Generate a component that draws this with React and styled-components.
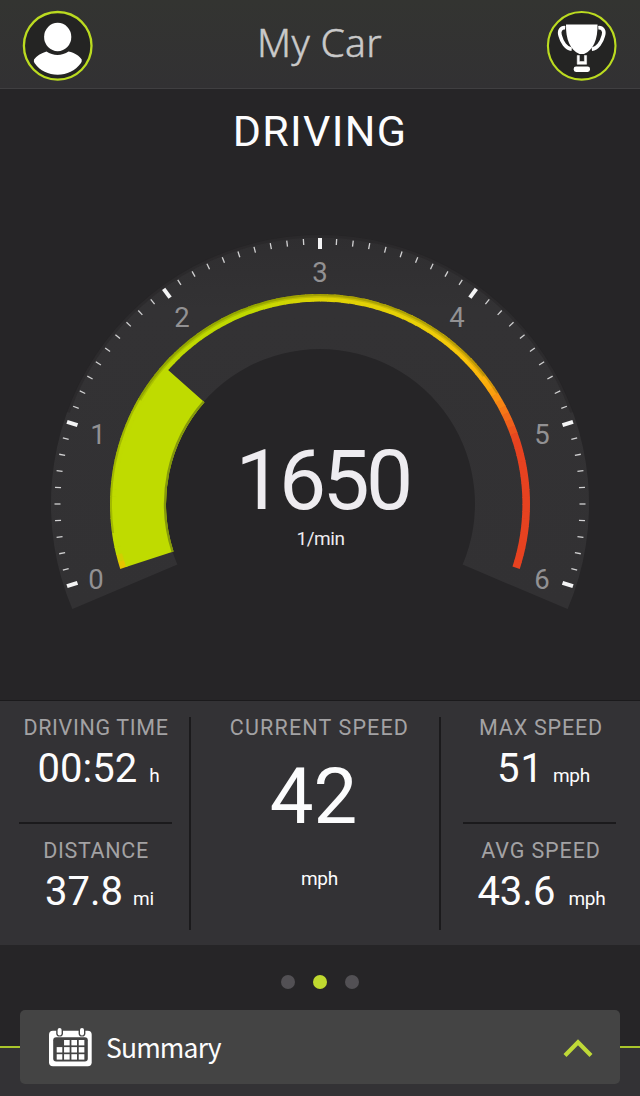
import React from 'react';
import styled, { createGlobalStyle, css, ThemeProvider } from 'styled-components';

const theme = {
  colors: {
    background: '#262527',
    panel: '#333235',
    card: '#444444',
    lime: '#bfd92f',
    arc: '#bfdb00',
    label: '#a3a2a4',
    line: '#1b1a1c',
    text: '#fcfcfd',
  },
  font: "Roboto, 'Noto Sans', sans-serif",
  titleFont: "'Noto Sans', 'Open Sans', sans-serif",
};

const GlobalStyle = createGlobalStyle`
  * {
    box-sizing: border-box;
  }

  body {
    margin: 0;
    background: #262527;
  }
`;

const Screen = styled.div(({ theme: t }) => css`
  display: flex;
  flex-direction: column;
  width: 640px;
  height: 1096px;
  overflow: hidden;
  background: ${t.colors.background};
  color: ${t.colors.text};
  font-family: ${t.font};
`);

const Header = styled.header`
  display: flex;
  justify-content: space-between;
  flex: none;
  height: 89px;
  padding: 10px 23px 0 22px;
  background: linear-gradient(#333431, #323133);
  border-bottom: 1px solid #403f41;
`;

const Title = styled.h1(({ theme: t }) => css`
  margin: -9px 0 0;
  color: #c9c9c9;
  font-family: ${t.titleFont};
  font-size: 39px;
  font-weight: 350;
  line-height: 82px;
  letter-spacing: 0.3px;
  -webkit-text-stroke: 0.5px #c9c9c9;
`);

const RoundButton = styled.button`
  width: 71px;
  height: 71px;
  padding: 0;
  border: 0;
  background: none;

  svg {
    display: block;
  }
`;

const Main = styled.main`
  flex: none;
  height: 611px;
`;

const Mode = styled.h2`
  height: 80px;
  margin: 0;
  font-size: 43px;
  font-weight: 400;
  line-height: 84px;
  letter-spacing: 1.3px;
  text-align: center;
`;

const GaugeArea = styled.div`
  display: grid;
  height: 531px;

  > * {
    grid-area: 1 / 1;
  }
`;

const Readout = styled.div`
  display: flex;
  flex-direction: column;
  align-items: center;
  padding-top: 276px;
`;

const Rpm = styled.div`
  padding-left: 5px;
  color: #eeecf0;
  font-size: 84px;
  line-height: 72px;
  letter-spacing: -3.7px;
`;

const RpmUnit = styled.div`
  margin-top: 9px;
  padding-left: 1px;
  color: #eeecf0;
  font-size: 19px;
  line-height: 26px;
  letter-spacing: -0.5px;
`;

const Stats = styled.section(({ theme: t }) => css`
  display: grid;
  grid-template-columns: 191px 250px 199px;
  flex: none;
  height: 245px;
  padding: 16px 0 15px;
  background: ${t.colors.panel};
  border-top: 1px solid ${t.colors.line};
`);

const Column = styled.div(({ theme: t, $divided }) => css`
  display: flex;
  flex-direction: column;
  border-right: ${$divided ? `2px solid ${t.colors.line}` : '0'};
`);

const Stat = styled.div`
  display: flex;
  flex-direction: column;
  flex: 1;
  align-items: center;
  padding-left: ${({ $shift }) => $shift || '0'};
`;

const Label = styled.div(({ theme: t, $spacing }) => css`
  color: ${t.colors.label};
  font-size: 21.5px;
  line-height: 21px;
  letter-spacing: ${$spacing || '0.65px'};
  white-space: nowrap;
`);

const Value = styled.div`
  display: flex;
  align-items: baseline;
  gap: ${({ $gap }) => $gap || '12px'};
  margin-top: 11px;
  padding-left: ${({ $shift }) => $shift || '0'};
  font-size: 40px;
  line-height: 40px;
  letter-spacing: ${({ $spacing }) => $spacing || '0'};
  white-space: nowrap;
`;

const Unit = styled.span`
  font-size: 19px;
  line-height: 1;
  letter-spacing: -0.2px;
`;

const BigValue = styled.div`
  margin-top: 19px;
  padding-right: 12px;
  font-size: 78px;
  line-height: 80px;
`;

const BigUnit = styled(Unit)`
  margin-top: 22px;
  line-height: 40px;
`;

const Rule = styled.hr(({ theme: t, $inset }) => css`
  width: 153px;
  height: 2px;
  margin: 15px 0 16px ${$inset};
  border: 0;
  background: ${t.colors.line};
`);

const Dots = styled.nav`
  display: flex;
  justify-content: center;
  gap: 18px;
  flex: none;
  height: 65px;
  padding-top: 30px;
`;

const Dot = styled.span(({ theme: t, $active }) => css`
  width: 14px;
  height: 14px;
  border-radius: 50%;
  background: ${$active ? t.colors.lime : '#525054'};
`);

const Footer = styled.footer(({ theme: t }) => css`
  flex: 1;
  padding: 0 20px;
  background: linear-gradient(
    ${t.colors.background} 36px,
    #a9c52b 36px,
    #a9c52b 38px,
    ${t.colors.panel} 38px
  );
`);

const SummaryBar = styled.div(({ theme: t }) => css`
  display: flex;
  align-items: center;
  height: 74px;
  padding: 0 27px 0 28px;
  border-radius: 5px;
  background: ${t.colors.card};

  svg:last-child {
    margin-left: auto;
  }
`);

const SummaryText = styled.span`
  margin-left: 14px;
  font-family: 'Noto Sans CJK SC', 'Noto Sans', sans-serif;
  font-size: 26.5px;
  line-height: 40px;
  letter-spacing: -0.85px;
`;

const CX = 320;
const CY = 504;

const point = (radius, degrees) => {
  const a = (degrees * Math.PI) / 180;
  return [
    (CX + radius * Math.cos(a)).toFixed(2),
    (CY - radius * Math.sin(a)).toFixed(2),
  ].join(' ');
};

// arcs run clockwise, from the larger angle to the smaller one
const arc = (radius, from, to) => (
  `M${point(radius, from)} A${radius} ${radius} 0 ${from - to > 180 ? 1 : 0} 1 ${point(radius, to)}`
);

const band = (outer, inner, from, to) => {
  const large = from - to > 180 ? 1 : 0;
  return `${arc(outer, from, to)} L${point(inner, to)} A${inner} ${inner} 0 ${large} 0 ${point(inner, from)} Z`;
};

const stops = [
  [198, [240, 190, 0]],
  [193, [191, 219, 0]],
  [110, [191, 217, 0]],
  [90, [222, 210, 5]],
  [62, [232, 208, 8]],
  [45, [250, 196, 12]],
  [35, [252, 172, 12]],
  [26, [244, 112, 24]],
  [18, [231, 66, 32]],
  [-18, [231, 66, 32]],
];

const colorAt = (angle) => {
  const i = Math.max(1, stops.findIndex(([a]) => a <= angle));
  const [a0, c0] = stops[i - 1];
  const [a1, c1] = stops[i];
  const k = (a0 - angle) / (a0 - a1);
  return `rgb(${c0.map((c, n) => Math.round(c + (c1[n] - c) * k)).join(',')})`;
};

const segments = Array.from({ length: 108 }, (_, i) => 198 - i * 2);
const ticks = Array.from({ length: 61 }, (_, i) => i);

const marks = [
  [0, 96, 589],
  [1, 98, 444],
  [2, 182, 327],
  [3, 320, 282],
  [4, 457, 327],
  [5, 542, 444],
  [6, 542, 589],
];

const Gauge = ({ rpm }) => {
  const end = 198 - (rpm / 1000) * 36;

  return (
    <svg width="640" height="531" viewBox="0 169 640 531">
      <defs>
        <linearGradient id="face" x1="0" x2="0" y1="234" y2="612" gradientUnits="userSpaceOnUse">
          <stop offset="0" stopColor="#2f2e30" />
          <stop offset="0.2" stopColor="#333234" />
          <stop offset="1" stopColor="#323133" />
        </linearGradient>
      </defs>
      <path d={band(269, 155, 203, -23)} fill="url(#face)" />
      <path d={arc(268, 160, 20)} fill="none" stroke="#252426" strokeOpacity="0.5" strokeWidth="3" />

      {ticks.map((i) => {
        const major = i % 10 === 0;
        const angle = 198 - i * 3.6;
        return (
          <path
            key={i}
            d={`M${point(major ? 255 : 259.5, angle)} L${point(major ? 266 : 265.5, angle)}`}
            stroke={major ? '#f4f4f5' : '#d2d2d3'}
            strokeWidth={major ? 4 : 1.3}
          />
        );
      })}

      {segments.map((a) => (
        <path
          key={a}
          d={arc(206.2, a, Math.max(-18, a - 2.2))}
          fill="none"
          stroke={colorAt(a - 1)}
          strokeWidth="7.6"
        />
      ))}
      <path d={band(204, 154, 198, end)} fill="#bfdb00" />
      <path d={arc(209, 188, 32)} fill="none" stroke="#4c5200" strokeOpacity="0.25" strokeWidth="2" />
      <path d={arc(208.2, 150, 38)} fill="none" stroke="#4c5200" strokeOpacity="0.18" strokeWidth="3.6" />
      <path d={arc(155, 198, end)} fill="none" stroke="#85990b" strokeWidth="2.2" />

      {marks.map(([label, x, y]) => (
        <text
          key={label}
          x={x}
          y={y}
          fill="#929193"
          fontFamily="Roboto, 'Noto Sans', sans-serif"
          fontSize="27.5"
          textAnchor="middle"
        >
          {label}
        </text>
      ))}
    </svg>
  );
};

const UserIcon = () => (
  <svg width="71" height="71" viewBox="22 10 71 71">
    <circle cx="57.7" cy="45.8" r="33.8" fill="#242423" stroke="#bbdb20" strokeWidth="2.3" />
    <ellipse cx="57.7" cy="37" rx="13.6" ry="14.2" fill="#fff" />
    <path d="M46.5 51.5 C53 56 62 56 68.5 51.5 C75 52.8 79.5 56 81.7 59.5 Q82 61.5 81 63 C75 71 67 74.7 57.7 74.7 C48.5 74.7 40 71 34.5 63 Q33.5 61.5 34 59.5 C36.5 56 41 53 46.5 51.5 Z" fill="#fff" />
  </svg>
);

const TrophyIcon = () => (
  <svg width="71" height="71" viewBox="546 10 71 71">
    <circle cx="581.7" cy="45.8" r="33.8" fill="#242423" stroke="#bbdb20" strokeWidth="2.1" />
    <path d="M566 24.5 H597.5 C597.8 39 593.5 50 584 54 H579.5 C570 50 565.7 39 566 24.5 Z" fill="#fff" />
    <path d="M565.2 27.7 C560.8 27.3 558.7 31 560.1 35.5 C561.8 42 566 48.5 571.7 49.2 M598.3 27.7 C602.7 27.3 604.8 31 603.4 35.5 C601.7 42 597.5 48.5 591.8 49.2" fill="none" stroke="#fff" strokeWidth="3.6" />
    <path d="M577.2 55.5 H579.4 V61.5 H584.4 V55.5 H586.6 V64.3 H577.2 Z" fill="#fff" stroke="#fff" strokeWidth="0.5" />
    <rect x="573.7" y="66.5" width="16.3" height="5.4" rx="2.3" fill="#fff" />
  </svg>
);

const CalendarIcon = () => (
  <svg width="44" height="40" viewBox="48 1027 44 40">
    <rect x="49" y="1030.7" width="42.7" height="35.5" rx="4" fill="#fff" />
    <rect x="53.2" y="1037.2" width="34.6" height="24.2" rx="3" fill="#444" />
    <rect x="56.2" y="1026.3" width="6.8" height="10.3" rx="3.4" fill="#444" />
    <rect x="78.6" y="1026.3" width="6.8" height="10.3" rx="3.4" fill="#444" />
    <rect x="57.6" y="1027.9" width="4" height="7.6" rx="2" fill="#fff" />
    <rect x="80" y="1027.9" width="4" height="7.6" rx="2" fill="#fff" />
    {[0, 1, 2].map((row) => [0, 1, 2, 3].map((col) => (
      (row > 0 || col > 0) && (
        <rect
          key={`${row}-${col}`}
          x={56.7 + col * 7.35}
          y={1040 + row * 7.1}
          width="5.6"
          height="5.4"
          fill="#fff"
        />
      )
    )))}
  </svg>
);

const ChevronUp = () => (
  <svg width="30" height="20" viewBox="563 1037 30 20">
    <path d="M565 1055.5 L578 1042.3 L591 1055.5" fill="none" stroke="#bfd937" strokeWidth="4.2" />
  </svg>
);

const App = () => (
  <ThemeProvider theme={theme}>
    <GlobalStyle />
    <Screen>
      <Header>
        <RoundButton aria-label="Profile"><UserIcon /></RoundButton>
        <Title>My Car</Title>
        <RoundButton aria-label="Trophies"><TrophyIcon /></RoundButton>
      </Header>

      <Main>
        <Mode>DRIVING</Mode>
        <GaugeArea>
          <Gauge rpm={1650} />
          <Readout>
            <Rpm>1650</Rpm>
            <RpmUnit>1/min</RpmUnit>
          </Readout>
        </GaugeArea>
      </Main>

      <Stats>
        <Column $divided>
          <Stat $shift="3px">
            <Label>DRIVING TIME</Label>
            <Value $shift="5px">
              00:52
              <Unit>h</Unit>
            </Value>
          </Stat>
          <Rule $inset="19px" />
          <Stat $shift="3px">
            <Label>DISTANCE</Label>
            <Value $gap="10px" $shift="7px">
              37.8
              <Unit>mi</Unit>
            </Value>
          </Stat>
        </Column>
        <Column $divided>
          <Stat $shift="9px">
            <Label $spacing="1.15px">CURRENT SPEED</Label>
            <BigValue>42</BigValue>
            <BigUnit>mph</BigUnit>
          </Stat>
        </Column>
        <Column>
          <Stat $shift="1px">
            <Label $spacing="0.8px">MAX SPEED</Label>
            <Value $spacing="1px" $gap="9px" $shift="5px">
              51
              <Unit>mph</Unit>
            </Value>
          </Stat>
          <Rule $inset="22px" />
          <Stat $shift="1px">
            <Label $spacing="0.9px">AVG SPEED</Label>
            <Value $gap="13px" $shift="1px">
              43.6
              <Unit>mph</Unit>
            </Value>
          </Stat>
        </Column>
      </Stats>

      <Dots>
        <Dot />
        <Dot $active />
        <Dot />
      </Dots>

      <Footer>
        <SummaryBar>
          <CalendarIcon />
          <SummaryText>Summary</SummaryText>
          <ChevronUp />
        </SummaryBar>
      </Footer>
    </Screen>
  </ThemeProvider>
);

export default App;
